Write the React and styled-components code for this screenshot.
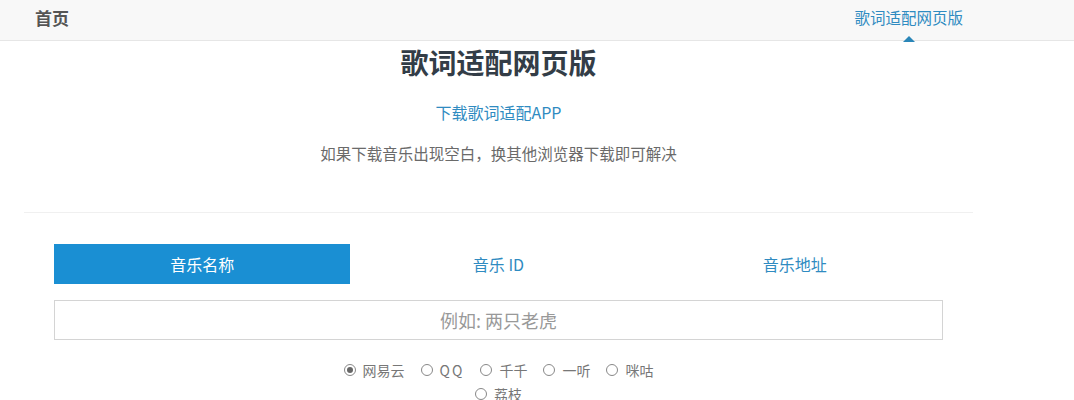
import React, { useState } from "react";
import styled, { createGlobalStyle } from "styled-components";

const Global = createGlobalStyle`
  html, body { margin: 0; padding: 0; background: #fff; }
  body { font-family: "Noto Sans CJK SC", "Noto Sans", "Liberation Sans", sans-serif; }
`;

const Header = styled.header`
  height: 40px;
  background: #f8f8f8;
  border-bottom: 1px solid #e6e6e6;
`;

const HeaderInner = styled.div`
  margin-left: 24px;
  width: 949px;
  box-sizing: border-box;
  padding: 0 10px 0 11px;
  height: 40px;
  display: flex;
  align-items: center;
  justify-content: space-between;
`;

const Brand = styled.span`
  font-size: 17px;
  font-weight: 700;
  color: #555;
  line-height: 36px;
  margin-top: -4px;
`;

const NavLink = styled.span`
  position: relative;
  font-size: 15.5px;
  color: #2f8bc1;
  line-height: 36px;
  margin-top: -6px;
  &::after {
    content: "";
    position: absolute;
    left: 50%;
    bottom: -7px;
    margin-left: -6px;
    border-left: 6px solid transparent;
    border-right: 6px solid transparent;
    border-bottom: 6px solid #2a86b8;
  }
`;

const Main = styled.main`
  margin-left: 24px;
  width: 949px;
`;

const Intro = styled.section`
  text-align: center;
  padding-bottom: 47px;
  border-bottom: 1px solid #f0f0f0;
`;

const Title = styled.h1`
  margin: 1px 0 0;
  font-size: 28px;
  line-height: 40px;
  font-weight: 700;
  color: #333d47;
`;

const AppLink = styled.a`
  display: block;
  margin-top: 18px;
  font-size: 16px;
  line-height: 24px;
  color: #2f8bc1;
  text-decoration: none;
`;

const Note = styled.p`
  margin: 17px 0 0;
  font-size: 15.5px;
  line-height: 24px;
  color: #6a6a6a;
`;

const Form = styled.section`
  padding: 31px 30px 0;
`;

const Tabs = styled.div`
  display: grid;
  grid-template-columns: repeat(3, 1fr);
  height: 40px;
`;

const Tab = styled.button`
  border: none;
  margin: 0;
  padding: 0;
  font-family: inherit;
  font-size: 16px;
  background: ${(p) => (p.$active ? "#1a8fd3" : "transparent")};
  color: ${(p) => (p.$active ? "#fff" : "#2f8bc1")};
  cursor: pointer;
`;

const Input = styled.input`
  display: block;
  box-sizing: border-box;
  width: 100%;
  height: 40px;
  margin-top: 16px;
  border: 1px solid #d4d4d4;
  text-align: center;
  font-family: inherit;
  font-size: 18px;
  color: #555;
  outline: none;
  &::placeholder { color: #999; }
`;

const Sources = styled.div`
  margin: 20px auto 0;
  width: 330px;
  display: flex;
  flex-wrap: wrap;
  justify-content: center;
  row-gap: 4px;
  column-gap: 16px;
`;

const Option = styled.label`
  display: flex;
  align-items: center;
  gap: 7px;
  height: 20px;
  font-size: 14px;
  color: #777;
  cursor: pointer;
`;

const Dot = styled.span`
  width: 10px;
  height: 10px;
  border: 1px solid #888;
  border-radius: 50%;
  box-sizing: content-box;
  position: relative;
  &::after {
    content: "";
    display: ${(p) => (p.$on ? "block" : "none")};
    position: absolute;
    inset: 2px;
    border-radius: 50%;
    background: #666;
  }
`;

const Wide = styled.span`
  letter-spacing: 2px;
`;

const tabs = ["音乐名称", "音乐 ID", "音乐地址"];
const sources = ["网易云", "QQ", "千千", "一听", "咪咕", "荔枝"];

export default function App() {
  const [tab, setTab] = useState(0);
  const [src, setSrc] = useState(0);
  return (
    <>
      <Global />
      <Header>
        <HeaderInner>
          <Brand>首页</Brand>
          <NavLink>歌词适配网页版</NavLink>
        </HeaderInner>
      </Header>
      <Main>
        <Intro>
          <Title>歌词适配网页版</Title>
          <AppLink href="#">下载歌词适配APP</AppLink>
          <Note>如果下载音乐出现空白，换其他浏览器下载即可解决</Note>
        </Intro>
        <Form>
          <Tabs>
            {tabs.map((t, i) => (
              <Tab key={t} $active={i === tab} onClick={() => setTab(i)}>
                {t}
              </Tab>
            ))}
          </Tabs>
          <Input placeholder="例如: 两只老虎" />
          <Sources>
            {sources.map((s, i) => (
              <Option key={s} onClick={() => setSrc(i)}>
                <Dot $on={i === src} />
                {s === "QQ" ? <Wide>{s}</Wide> : s}
              </Option>
            ))}
          </Sources>
        </Form>
      </Main>
    </>
  );
}
